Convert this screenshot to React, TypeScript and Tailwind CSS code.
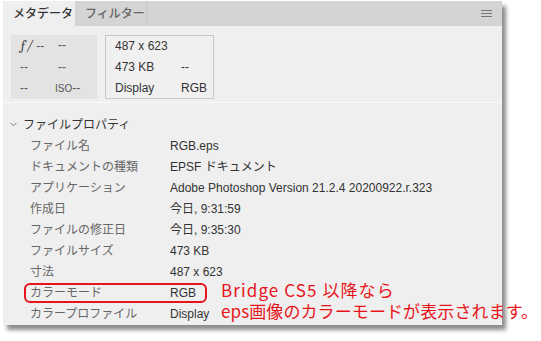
import React from 'react';

const font = { fontFamily: '"Liberation Sans", "Noto Sans CJK JP", sans-serif' };

const rows: [string, string][] = [
  ['ファイル名', 'RGB.eps'],
  ['ドキュメントの種類', 'EPSF ドキュメント'],
  ['アプリケーション', 'Adobe Photoshop Version 21.2.4 20200922.r.323'],
  ['作成日', '今日, 9:31:59'],
  ['ファイルの修正日', '今日, 9:35:30'],
  ['ファイルサイズ', '473 KB'],
  ['寸法', '487 x 623'],
  ['カラーモード', 'RGB'],
  ['カラープロファイル', 'Display'],
];

const App: React.FC = () => {
  return (
    <div className="w-[541px] h-[341px] bg-white pl-[3px] pt-[1px] relative overflow-hidden" style={font}>
      {/* Panel */}
      <div className="w-[499px] h-[324px] bg-[#efefef] flex flex-col overflow-hidden shadow-[4px_5px_4px_rgba(0,0,0,0.45)]">
        {/* Tabs */}
        <div className="h-[25px] bg-[#d4d4d4] flex items-stretch shrink-0">
          <div className="w-[72px] bg-[#efefef] flex items-center pl-[10px] text-[12px] font-medium text-[#333]">
            メタデータ
          </div>
          <div className="w-[72px] border-r border-[#c9c9c9] flex items-center pl-[10px] text-[12px] font-medium text-[#666]">
            フィルター
          </div>
          <div className="flex-1 flex items-center justify-end pr-[10px]">
            <div className="flex flex-col gap-[2px]">
              <div className="w-[11px] h-[1px] bg-[#777]" />
              <div className="w-[11px] h-[1px] bg-[#777]" />
              <div className="w-[11px] h-[1px] bg-[#777]" />
            </div>
          </div>
        </div>

        {/* Quick info boxes */}
        <div className="flex gap-[8px] pl-[8px] pt-[9px] h-[77px] shrink-0 border-b border-[#fafafa]">
          <div className="w-[86px] h-[64px] bg-[#e3e3e3] grid grid-cols-[38px_1fr] content-center gap-y-[6px] pl-[9px] text-[12px] text-[#555] leading-[15px]">
            <div><span className="italic font-serif text-[14px] text-[#444]">ƒ/</span> --</div>
            <div>--</div>
            <div>--</div>
            <div>--</div>
            <div>--</div>
            <div className="-ml-[3px]"><span className="text-[10px]">ISO</span>--</div>
          </div>
          <div className="w-[109px] h-[64px] border border-[#c8c8c8] bg-[#f0f0f0] grid grid-cols-[66px_1fr] content-center gap-y-[6px] pl-[9px] text-[12px] text-[#333] leading-[15px]">
            <div className="col-span-2">487 x 623</div>
            <div>473 KB</div>
            <div>--</div>
            <div>Display</div>
            <div>RGB</div>
          </div>
        </div>

        {/* File properties */}
        <div className="pt-[11px] flex flex-col text-[12px]">
          <div className="h-[21px] flex items-center pl-[7px] text-[#333]">
            <svg width="7" height="5" viewBox="0 0 7 5" className="mr-[6px]">
              <path d="M0.5 0.8 L3.5 3.8 L6.5 0.8" fill="none" stroke="#777" strokeWidth="1" />
            </svg>
            ファイルプロパティ
          </div>
          {rows.map(([label, value]) => (
            <div key={label} className="h-[21px] flex items-center">
              <div className="w-[167px] pl-[27px] text-[#666]">{label}</div>
              <div className="text-[#333]">{value}</div>
            </div>
          ))}
        </div>
      </div>

      {/* Annotation */}
      <div className="absolute left-[24px] top-[283px] w-[183px] h-[20px] border-2 border-[#e8141b] rounded-[6px]" />
      <div
        className="absolute left-[221px] top-[279px] text-[17px] leading-[21px] text-[#e8141b] whitespace-nowrap"
        style={{ fontFamily: '"Noto Sans CJK JP", sans-serif' }}
      >
        <div className="tracking-[1.1px]">Bridge CS5 以降なら</div>
        <div className="tracking-[0.1px]">eps画像のカラーモードが表示されます。</div>
      </div>
    </div>
  );
};

export default App;
